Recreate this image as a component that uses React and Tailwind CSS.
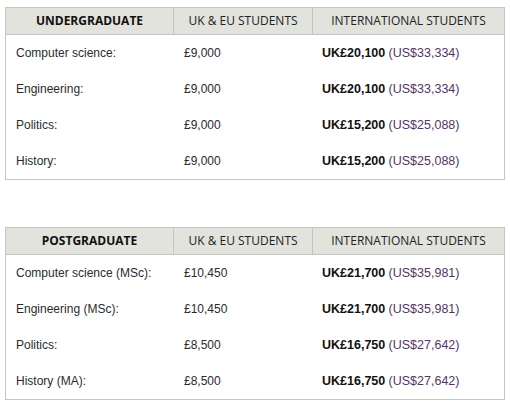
import React from 'react';

const tables = [
  {
    title: 'UNDERGRADUATE',
    rows: [
      ['Computer science:', '£9,000', 'UK£20,100', '(US$33,334)'],
      ['Engineering:', '£9,000', 'UK£20,100', '(US$33,334)'],
      ['Politics:', '£9,000', 'UK£15,200', '(US$25,088)'],
      ['History:', '£9,000', 'UK£15,200', '(US$25,088)'],
    ],
  },
  {
    title: 'POSTGRADUATE',
    rows: [
      ['Computer science (MSc):', '£10,450', 'UK£21,700', '(US$35,981)'],
      ['Engineering (MSc):', '£10,450', 'UK£21,700', '(US$35,981)'],
      ['Politics:', '£8,500', 'UK£16,750', '(US$27,642)'],
      ['History (MA):', '£8,500', 'UK£16,750', '(US$27,642)'],
    ],
  },
];

function FeeTable({ title, rows }) {
  return (
    <div className="w-[500px] border border-[#c4c4c4] bg-white">
      {/* Header */}
      <div className="grid grid-cols-[168px_139px_1fr] h-[27px] bg-[#e3e3dd] border-b border-[#c4c4c4] font-['Open_Sans',sans-serif] text-[12px]">
        <div className="flex items-center justify-center font-bold text-[#111] border-r border-[#c4c4c4]">{title}</div>
        <div className="flex items-center justify-center text-[#222] border-r border-[#c4c4c4]">UK &amp; EU STUDENTS</div>
        <div className="flex items-center justify-center text-[#222]">INTERNATIONAL STUDENTS</div>
      </div>
      {/* Body */}
      <div className="font-['Liberation_Sans',Arial,sans-serif] text-[12px] text-[#2b2b2b]">
        {rows.map((r, i) => (
          <div key={i} className="grid grid-cols-[168px_139px_1fr] h-[36px] items-center">
            <div className="pl-[10px]">{r[0]}</div>
            <div className="pl-[10px]">{r[1]}</div>
            <div className="pl-[9px]">
              <span className="font-bold text-[#111] text-[12.5px]">{r[2]}</span>{' '}
              <span className="text-[#54365f] text-[12.5px]">{r[3]}</span>
            </div>
          </div>
        ))}
      </div>
    </div>
  );
}

export default function App() {
  return (
    <div className="min-h-screen bg-white pl-[5px] pt-[7px] flex flex-col gap-[47px]">
      {tables.map((t) => (
        <FeeTable key={t.title} title={t.title} rows={t.rows} />
      ))}
    </div>
  );
}
